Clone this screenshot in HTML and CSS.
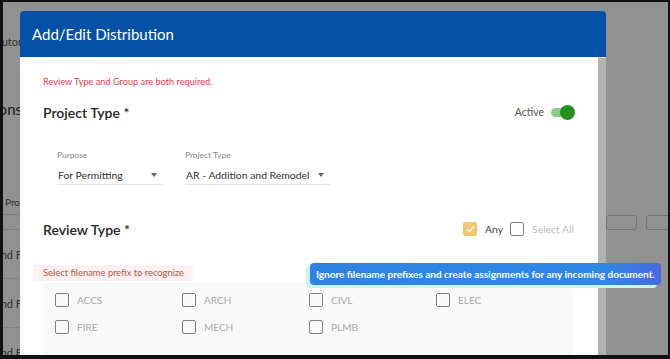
FILE: index.html
```html
<!DOCTYPE html>
<html lang="en">
<head>
    <meta charset="UTF-8">
    <meta name="viewport" content="width=device-width, initial-scale=1.0">
    <title>Add/Edit Distribution</title>
    <link rel="stylesheet" href="styles.css">
</head>
<body>
    <div class="screen">
        <!-- page behind the dialog -->
        <div class="page">
            <div class="page-left">
                <div class="bg-row bg-title"><span>Distributor</span></div>
                <div class="bg-row bg-heading"><span>Distributions</span></div>
                <div class="bg-row bg-head"><span>Project Type</span></div>
                <div class="bg-row bg-item"><span>Add and F</span></div>
                <div class="bg-row bg-item"><span>Add and F</span></div>
                <div class="bg-row bg-item"><span>Add and F</span></div>
            </div>
            <div class="page-main">
                <div class="bg-filters">
                    <div class="bg-box"></div>
                    <div class="bg-box"></div>
                </div>
            </div>
        </div>
        <div class="overlay"></div>

        <div class="modal">
            <div class="modal-header">Add/Edit Distribution</div>
            <div class="modal-body">
                <div class="modal-content">
                    <p class="error">Review Type and Group are both required.</p>

                    <div class="section-head">
                        <h2>Project Type *</h2>
                        <div class="active">
                            <span>Active</span>
                            <span class="toggle"><span class="knob"></span></span>
                        </div>
                    </div>

                    <div class="selects">
                        <div class="select sel-purpose">
                            <label>Purpose</label>
                            <div class="select-value">For Permitting <span class="caret"></span></div>
                        </div>
                        <div class="select sel-type">
                            <label>Project Type</label>
                            <div class="select-value">AR - Addition and Remodel <span class="caret"></span></div>
                        </div>
                    </div>

                    <div class="section-head review">
                        <h2>Review Type *</h2>
                        <div class="review-opts">
                            <span class="check checked">
                                <svg width="9" height="8" viewBox="0 0 9 8"><path d="M1 4.2 L3.4 6.4 L8 1.2" fill="none" stroke="#fff" stroke-width="1.4"/></svg>
                            </span>
                            <span class="any">Any</span>
                            <span class="check"></span>
                            <span class="select-all">Select All</span>
                        </div>
                    </div>

                    <div class="prefix-hint"><span>Select filename prefix to recognize</span></div>

                    <div class="prefix-grid">
                        <div class="prefix"><span class="check"></span>ACCS</div>
                        <div class="prefix"><span class="check"></span>ARCH</div>
                        <div class="prefix"><span class="check"></span>CIVL</div>
                        <div class="prefix"><span class="check"></span>ELEC</div>
                        <div class="prefix"><span class="check"></span>FIRE</div>
                        <div class="prefix"><span class="check"></span>MECH</div>
                        <div class="prefix"><span class="check"></span>PLMB</div>
                    </div>
                </div>
                <div class="scrollbar"></div>
            </div>
        </div>

        <div class="tooltip">Ignore filename prefixes and create assignments for any incoming document.</div>
    </div>
</body>
</html>
```

FILE: styles.css
```css
body {
    margin: 0;
    padding: 0;
    background: #111;
    font-family: Lato, "Open Sans", Arial, sans-serif;
}
.screen {
    position: relative;
    width: 665px;
    height: 353px;
    margin: 2px 2px 0 3px;
    overflow: hidden;
    background: #fff;
}
.page {
    display: flex;
    height: 100%;
}
.page-left {
    width: 19px;
    overflow: hidden;
    color: #555;
}
.bg-row {
    display: flex;
    justify-content: flex-end;
    white-space: nowrap;
}
.bg-title {
    margin-top: 33px;
    font-size: 11px;
}
.bg-heading {
    margin-top: 52px;
    font-size: 15px;
    color: #333;
}
.bg-head {
    justify-content: flex-start;
    margin-top: 78px;
    padding: 0 0 6px 2px;
    font-size: 10px;
    border-bottom: 1px solid #ddd;
}
.bg-item {
    height: 48px;
    align-items: center;
    font-size: 11px;
    border-bottom: 1px solid #e4e4e4;
}
.bg-head + .bg-item {
    margin-top: 14px;
    border-top: 1px solid #ddd;
}
.page-main {
    flex: 1;
}
.bg-filters {
    display: flex;
    justify-content: flex-end;
    gap: 9px;
    margin-top: 213px;
    margin-right: -20px;
}
.bg-box {
    width: 29px;
    height: 13px;
    border: 1px solid #ccc;
    border-radius: 3px;
}
.bg-box + .bg-box {
    width: 40px;
}
.overlay {
    position: absolute;
    inset: 0;
    background: rgba(0, 0, 0, 0.43);
}
.modal {
    position: absolute;
    left: 17px;
    top: 9px;
    width: 586px;
    height: 360px;
    display: flex;
    flex-direction: column;
}
.modal-header {
    height: 46px;
    background: #0651a8;
    border-radius: 4px 4px 0 0;
    color: #fff;
    font-size: 15px;
    line-height: 46px;
    padding-left: 12px;
}
.modal-body {
    flex: 1;
    display: flex;
}
.modal-content {
    flex: 1;
    background: #fff;
    padding: 18px 24px 0 23px;
}
.scrollbar {
    width: 8px;
    background: #b2b2b2;
    border-top: 1px solid #d6d6d6;
}
.error {
    margin: 0;
    font-size: 9.2px;
    line-height: 14px;
    color: #ec3c4c;
}
.section-head {
    display: flex;
    align-items: center;
    justify-content: space-between;
    margin-top: 13px;
    height: 20px;
}
.section-head h2 {
    margin: 0;
    font-size: 14px;
    font-weight: 600;
    color: #262626;
}
.active {
    display: flex;
    align-items: center;
    gap: 7px;
    font-size: 10.5px;
    color: #555;
}
.toggle {
    position: relative;
    width: 23px;
    height: 9px;
    border-radius: 5px;
    background: #8ccb8a;
}
.knob {
    position: absolute;
    right: -1px;
    top: -3px;
    width: 15px;
    height: 15px;
    border-radius: 50%;
    background: #24901f;
}
.selects {
    display: flex;
    gap: 22px;
    margin: 28px 0 0 14px;
}
.select label {
    display: block;
    font-size: 8.4px;
    line-height: 11px;
    color: #888;
}
.select-value {
    display: flex;
    align-items: center;
    justify-content: space-between;
    height: 18px;
    margin-top: 5px;
    padding: 0 6px 0 1px;
    font-size: 10.4px;
    color: #333;
    border-bottom: 1px solid #e2e2e2;
}
.sel-purpose {
    width: 106px;
}
.sel-type {
    width: 145px;
}
.caret {
    width: 0;
    height: 0;
    border-left: 3.5px solid transparent;
    border-right: 3.5px solid transparent;
    border-top: 4px solid #666;
}
.review {
    margin-top: 34px;
}
.review-opts {
    display: flex;
    align-items: center;
    font-size: 10.4px;
}
.check {
    display: inline-flex;
    align-items: center;
    justify-content: center;
    box-sizing: border-box;
    width: 14px;
    height: 14px;
    border: 1.5px solid #808080;
    border-radius: 2px;
    background: #fff;
}
.check.checked {
    border: none;
    background: #f6c46e;
}
.any {
    margin: 0 7px 0 8px;
    color: #444;
}
.select-all {
    margin-left: 8px;
    color: #bbb;
}
.prefix-hint {
    margin: 21px 0 0 -10px;
}
.prefix-hint span {
    display: inline-block;
    width: 160px;
    box-sizing: border-box;
    padding-left: 10px;
    font-size: 9.4px;
    line-height: 16px;
    white-space: nowrap;
    color: #b45a3c;
    background: #fff1f3;
}
.prefix-grid {
    display: grid;
    grid-template-columns: repeat(4, 127px);
    row-gap: 13px;
    margin-top: 1px;
    padding: 11px 0 30px 12px;
    background: #f9f9f9;
}
.prefix {
    display: flex;
    align-items: center;
    height: 14px;
    font-size: 10px;
    color: #a8a8a8;
}
.prefix .check {
    margin-right: 8px;
    background: transparent;
}
.tooltip {
    position: absolute;
    left: 307px;
    top: 261px;
    padding: 0 6px;
    height: 22px;
    line-height: 22px;
    border-radius: 4px;
    background: linear-gradient(90deg, #2e82e2 0%, #2f86e6 85%, #4a68df 100%);
    box-shadow: -4px 3px 0 #c9f5fa;
    color: #fff;
    font-size: 10px;
    font-weight: 700;
    white-space: nowrap;
}
```
